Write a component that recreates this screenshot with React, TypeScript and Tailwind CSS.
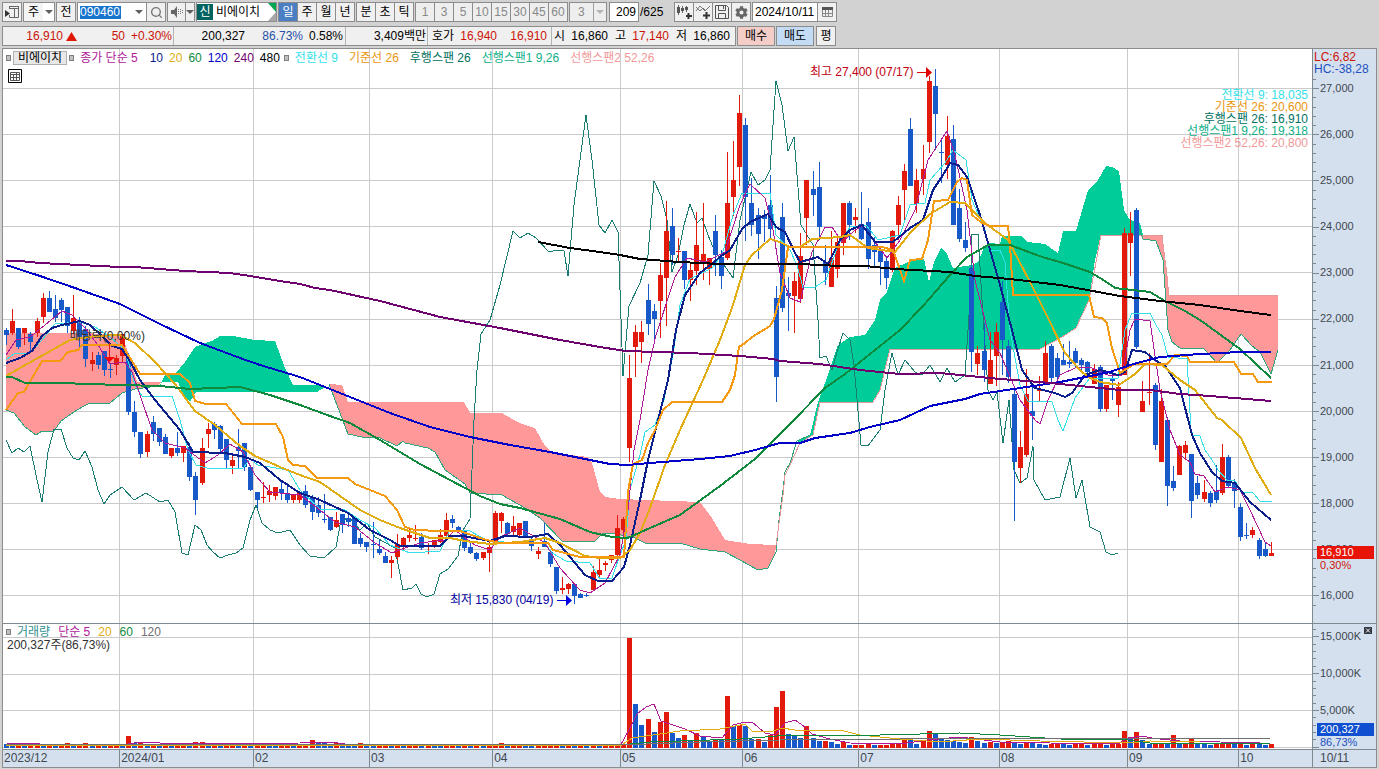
import type { ReactNode } from 'react';
import { Search } from 'lucide-react';
import { FaCog } from 'react-icons/fa';

const FIRST_X = 6;
const STEP = 6.11;

// one candle per entry: colour, high, body top, body bottom, low
const CANDLES = `
b 328 330 335 345|r 309 321 333 335|b 328 328 347 349|r 328 328 333 345|b 332 334 342 353|r 318 321 333 337|r 293 298 317 323|b 291 298 312 312
b 295 309 318 322|b 298 300 310 322|b 307 307 326 333|r 295 318 331 334|b 317 322 337 347|b 326 329 359 367|r 352 360 364 371|b 352 355 365 369
b 351 351 370 376|b 364 369 370 378|r 355 358 365 375|r 334 334 356 363|b 353 358 412 415|b 401 412 432 437|b 432 432 454 458|r 431 434 452 457
b 416 422 434 441|b 428 428 442 446|b 434 437 454 454|r 448 448 456 458|b 432 448 453 456|r 446 446 453 462|b 443 447 477 481|b 472 476 500 515
r 438 448 483 485|r 423 429 434 448|b 422 424 430 439|b 425 426 449 453|b 439 439 460 468|r 453 460 466 474|b 429 447 451 469|b 443 443 467 471
b 465 467 490 491|b 492 492 500 508|r 482 497 498 503|r 485 491 495 502|r 487 487 496 500|b 482 489 493 500|b 483 493 500 503|r 494 494 500 503
r 493 493 500 503|b 485 491 505 508|b 495 497 512 520|b 497 505 513 517|b 494 519 520 523|b 517 517 530 531|r 512 520 527 528|b 514 514 525 533
b 512 518 522 527|b 517 517 544 544|b 533 538 544 547|b 542 542 547 552|b 522 544 545 558|b 540 549 553 555|b 552 556 563 563|r 556 560 563 578
r 534 544 557 560|r 537 538 546 550|r 527 535 538 542|r 525 538 539 541|b 533 537 548 550|r 543 545 547 554|r 540 540 545 548|r 529 535 542 543
r 513 520 536 537|b 515 519 523 528|b 526 527 531 531|b 530 530 548 551|b 543 547 553 554|b 552 553 559 561|r 552 552 558 560|r 542 547 553 572
r 511 513 543 545|r 512 513 521 533|b 522 523 534 535|r 516 526 532 535|r 523 523 535 537|b 521 521 538 538|b 537 541 546 551|r 547 551 554 559
b 523 541 547 547|b 552 552 564 567|b 567 567 591 594|r 577 588 590 594|r 583 584 589 594|b 584 584 596 604|b 593 594 598 598|b 593 595 596 597
r 566 572 590 591|r 557 570 575 577|r 561 563 565 571|r 555 555 560 563|r 515 528 555 557|r 517 519 530 533|r 355 378 448 462|r 325 332 347 377
r 321 332 342 363|b 284 300 324 335|b 304 311 319 339|r 263 275 301 338|r 201 231 278 326|b 208 226 255 265|r 238 251 252 262|b 251 251 280 289
r 263 270 280 301|r 212 245 271 285|r 203 254 264 280|r 258 258 269 285|b 215 231 255 276|b 250 257 276 289|r 152 203 258 260|r 141 180 197 216
r 95 113 167 186|b 118 125 197 241|b 178 203 225 236|b 208 215 234 259|b 210 216 219 242|b 175 205 229 240|b 286 298 377 402|b 203 217 308 312
b 277 293 296 331|r 272 281 296 333|r 233 256 299 303|r 180 180 218 245|b 171 189 195 216|b 162 187 227 240|b 245 262 273 285|r 231 258 287 287
r 237 242 269 278|r 203 203 243 255|b 201 203 225 240|r 208 217 220 233|b 192 224 239 240|b 208 222 259 269|b 237 245 252 268|b 247 249 262 285
b 257 261 278 289|r 230 231 269 272|r 196 205 225 240|r 164 171 190 220|b 118 129 186 186|r 169 180 204 213|r 145 169 179 195|r 76 81 142 153
b 69 86 114 150|b 139 152 153 183|r 116 136 165 179|b 125 139 225 225|b 189 208 239 242|b 222 240 248 252|b 265 268 352 372|r 346 353 364 375
b 323 351 370 382|r 332 360 384 384|r 323 332 356 386|b 281 302 340 375|b 340 346 377 383|b 390 394 462 521|r 431 447 468 483|r 369 394 455 457
b 385 411 416 440|r 376 390 391 402|r 341 353 382 385|b 344 346 378 383|b 353 358 377 385|b 344 360 365 365|b 341 362 364 368|b 348 351 363 367
b 358 360 365 372|b 361 362 372 377|r 364 369 384 384|b 365 367 409 412|r 385 385 409 412|b 375 378 381 400|r 382 387 405 417|r 228 233 375 375
r 212 233 243 276|b 208 210 347 349|r 381 401 412 412|r 353 392 393 405|b 383 385 445 450|r 389 401 462 462|b 417 420 486 506|b 466 481 488 491
r 445 446 475 475|r 441 445 453 460|b 454 454 501 518|b 476 483 495 499|r 480 492 499 502|b 491 493 503 507|b 465 491 500 503|r 444 457 493 495
b 455 457 486 487|b 479 482 491 508|b 503 507 537 541|b 523 535 536 539|r 527 530 535 538|b 538 540 556 559|b 542 549 556 557|r 542 553 556 556`
  .trim()
  .split(/[|\n]/)
  .map((row) => {
    const [tone, ...nums] = row.split(' ');
    const [high, top, bottom, low] = nums.map(Number);
    return { up: tone === 'r', high, top, bottom, low };
  });

const VOLUMES = (
  '4 3 4 3 3 4 3 4 3 3 5 3 4 5 3 4 3 3 4 3 12 5 6 4 4 3 4 3 3 4 3 6 6 4 4 3 3 4 3 4 3 3 5 4 2 3 4 3 3 3 8 6 5 4 5 4 3 2 5 4 ' +
  '3 3 4 3 4 3 3 4 3 4 3 2 2 3 2 3 2 3 2 2 4 5 3 4 4 3 2 2 3 3 3 2 3 2 3 2 3 2 2 3 3 4 ' +
  '110 44 23 29 16 26 36 15 10 13 8 15 12 6 9 8 52 22 23 22 9 9 6 13 41 57 14 12 10 22 10 7 7 6 4 6 3 3 3 5 3 3 3 4 4 10 9 4 7 17 14 9 ' +
  '8 7 6 5 11 7 5 6 5 6 7 5 4 6 5 4 3 4 5 4 3 4 5 3 4 4 3 4 4 17 9 16 8 4 4 5 4 13 4 4 9 5 4 3 4 4 5 4 4 3 5 4 3 4 3 2'
)
  .split(' ')
  .map(Number);

const CLOUDS = [
  { fill: '#ff9999', points: '6,333 85,333 122,335 130,358 137,382 161,382 158,386 135,389 122,393 110,403 90,403 82,407 74,412 61,421 54,431 42,431 36,435 25,427 14,413 6,410' },
  { fill: '#00cc99', points: '160,386 165,375 175,374 185,362 195,347 205,343 212,341 220,336 233,336 255,340 275,341 285,368 293,385 320,385 325,387 317,392 196,392 190,402 183,395 178,382 161,382' },
  { fill: '#ff9999', points: '329,384 342,385 348,402 464,402 470,413 502,413 512,419 522,424 535,428 545,446 552,453 588,457 592,463 600,492 605,497 620,499 700,502 712,518 725,540 750,544 776,545 775,555 768,568 758,570 740,560 725,552 700,549 680,543 645,543 635,538 625,536 612,533 603,533 595,541 562,541 540,518 525,508 502,495 470,493 465,484 445,470 435,452 428,448 405,443 403,441 397,446 380,438 362,437 348,434' },
  { fill: '#00cc99', points: '797,441 810,435 818,402 828,375 838,345 850,337 865,335 875,320 880,300 887,292 895,268 908,262 924,259 929,282 934,262 941,248 947,254 953,268 972,265 978,262 984,248 990,243 1000,244 1002,236 1022,236 1027,242 1045,244 1058,253 1063,231 1076,231 1088,190 1098,180 1106,166 1112,167 1119,171 1124,210 1130,220 1140,223 1143,235 1101,235 1095,260 1089,300 1076,328 1062,337 1040,349 890,349 885,370 880,390 873,402 820,402 813,435 800,443' },
  { fill: '#ff9999', points: '1140,235 1162,235 1167,270 1169,295 1278,295 1278,350 1271,374 1260,352 1252,346 1241,334 1230,350 1217,363 1208,353 1204,349 1180,348 1172,342 1168,330 1163,260 1156,241 1143,239' },
];

const PRICE_LINES = [
  { color: '#2fa57c', width: 1, points: '6,410 14,413 25,427 36,435 42,431 54,431 61,421 74,412 82,407 90,403 110,403 122,393 135,389 158,386' },
  { color: '#2fa57c', width: 1, points: '329,384 348,434 362,437 380,438 397,446 403,441 405,443 428,448 435,452 445,470 465,484 470,493 502,495 525,508 540,518 562,541 595,541 603,533 612,533 625,536 635,538 645,543 680,543 700,549 725,552 740,560 758,570 768,568 776,552 779,520 783,490 785,472 790,463 797,441 810,435' },
  { color: '#e59a9a', width: 1, points: '776,545 783,495 785,475 790,465 800,443 813,435 820,402 873,402 880,390 890,349 1040,349 1062,337 1076,328 1089,300 1101,235 1162,235 1169,295 1278,295' },
  { color: '#2fa57c', width: 1, points: '1137,223 1143,239 1156,241 1163,260 1168,330 1172,342 1180,348 1204,349 1208,353 1217,363 1230,350 1241,334 1252,346 1260,352 1271,374 1278,350' },
  { color: '#1a7d72', width: 1, points: '6,440 12,453 18,448 24,452 30,446 36,475 42,502 48,452 54,429 61,429 67,448 73,458 79,460 85,451 92,467 98,490 104,504 110,495 122,487 134,500 146,493 160,502 168,500 175,512 182,553 188,555 195,525 201,530 207,545 213,552 220,558 228,555 236,553 243,548 250,520 256,505 262,523 270,530 278,533 290,530 300,545 310,556 324,558 336,547 341,520 350,518 360,530 367,523 375,537 395,548 403,590 412,588 416,584 421,594 427,597 434,594 440,574 448,569 458,556 463,530 470,519 472,470 474,420 477,370 481,334 490,320 500,285 513,231 520,238 528,233 536,238 549,252 557,250 564,251 568,276 574,205 586,115 592,160 599,225 605,233 612,220 618,232 623,376 629,306 640,283 648,255 654,181 661,196 667,220 672,272 678,255 684,225 690,204 697,223 702,218 708,235 715,252 722,262 733,278 740,220 751,172 758,185 765,180 770,170 776,81 782,105 788,151 794,137 801,225 813,245 818,320 820,358 826,356 832,370 837,352 843,333 850,340 854,365 861,445 868,446 880,430 885,390 892,353 898,375 905,360 915,372 922,375 930,365 940,382 947,368 955,382 965,375 970,300 972,234 978,234 982,300 988,390 993,400 997,392 1003,443 1009,400 1014,470 1020,483 1027,478 1033,446 1034,480 1045,500 1060,497 1070,458 1076,498 1082,480 1090,527 1100,532 1106,552 1112,555 1118,553' },
  { color: '#33e0e8', width: 1, points: '6,360 14,354 30,353 42,340 55,324 80,322 95,327 110,337 125,350 135,385 142,396 172,396 180,420 188,450 196,465 207,468 243,468 250,459 258,465 288,470 300,490 320,509 345,510 360,520 375,528 390,545 410,553 440,551 450,530 470,531 488,541 520,543 545,543 552,553 566,561 590,563 600,579 612,578 620,555 626,540 630,490 640,455 645,432 655,425 664,400 673,355 680,305 690,279 712,268 722,255 733,215 742,193 770,193 776,235 790,250 797,265 803,288 815,287 826,280 838,245 850,227 866,225 878,240 900,235 910,205 925,203 930,180 945,163 953,150 966,160 972,200 985,230 990,250 1000,250 1005,262 1010,330 1020,385 1028,401 1052,402 1058,420 1063,431 1075,398 1090,378 1118,378 1125,330 1132,313 1150,313 1156,325 1162,335 1168,357 1187,359 1191,430 1193,435 1200,436 1205,450 1212,460 1218,470 1227,480 1235,481 1242,492 1253,493 1260,501 1272,501' },
  { color: '#b01898', width: 1, points: '6,355 16,340 30,337 45,325 62,311 72,315 85,328 98,345 110,364 125,362 132,372 140,395 152,430 165,443 185,448 205,463 218,455 230,444 243,452 255,475 270,492 300,495 320,510 335,522 355,527 375,543 392,553 405,548 420,543 445,540 455,530 475,545 490,550 500,537 520,528 545,543 560,568 580,590 590,593 605,583 620,555 628,510 634,450 640,420 648,370 656,335 675,277 687,258 705,262 725,252 740,205 750,184 765,198 773,230 780,273 790,298 800,302 812,252 825,227 832,227 842,242 855,230 862,226 872,238 887,258 900,240 915,210 928,160 947,131 955,155 967,210 975,280 990,340 1000,353 1008,372 1020,400 1035,420 1040,424 1048,400 1060,375 1075,368 1090,367 1110,376 1122,375 1130,330 1135,319 1150,321 1160,390 1170,430 1180,455 1190,462 1195,474 1204,476 1215,492 1228,487 1240,490 1250,510 1265,542 1271,546' },
  { color: '#0a1e8c', width: 2, points: '6,363 20,358 32,351 42,336 52,328 62,325 80,321 90,325 103,337 112,346 122,349 130,361 140,380 155,400 180,430 193,452 225,453 245,457 260,463 280,480 300,493 320,500 348,513 370,530 390,540 400,546 440,546 450,536 463,536 490,541 505,536 530,537 548,534 560,545 585,575 598,581 612,581 624,567 630,545 640,500 648,460 658,420 668,380 676,330 685,295 700,273 720,257 730,250 742,229 750,222 768,214 776,227 785,232 795,253 800,262 818,257 828,264 840,240 850,230 862,225 875,242 893,242 910,228 923,220 933,190 943,175 950,163 958,165 967,177 980,215 990,250 1000,285 1012,330 1022,370 1035,388 1055,393 1065,397 1072,393 1085,375 1100,370 1118,375 1125,372 1132,350 1145,352 1155,360 1165,366 1180,388 1192,435 1200,453 1212,472 1222,481 1235,483 1250,502 1271,520' },
  { color: '#e0ac10', width: 2, points: '6,376 20,368 45,354 70,340 95,336 120,335 135,343 155,362 175,384 195,411 215,425 240,446 255,456 280,467 300,475 320,482 340,496 360,510 380,520 400,528 430,538 450,538 465,541 490,544 520,542 545,538 560,543 585,556 600,558 620,558 630,550 640,533 650,508 665,465 680,430 703,380 720,340 733,305 745,265 752,255 770,239 780,242 790,247 800,247 812,239 840,237 850,235 868,248 895,252 910,233 930,214 950,202 965,203 985,223 1008,240 1030,282 1050,322 1065,353 1080,370 1088,377 1100,382 1119,385 1135,374 1145,364 1162,365 1180,380 1195,390 1217,418 1222,420 1241,438 1255,468 1271,495' },
  { color: '#f59a10', width: 2, points: '6,410 18,393 24,392 42,361 60,361 68,352 78,350 82,345 122,345 140,374 180,374 190,383 195,401 206,404 226,404 242,424 276,424 283,437 288,460 293,465 305,466 317,478 348,478 355,484 385,496 397,510 405,527 415,530 440,531 460,531 480,538 487,540 500,543 548,543 553,550 580,557 624,557 628,492 633,464 642,460 648,443 655,430 663,410 672,402 722,402 730,390 735,375 739,347 745,343 752,337 770,326 774,319 782,290 788,247 882,247 893,250 904,281 910,260 922,259 928,240 934,201 948,200 957,182 962,178 967,180 972,215 982,223 990,226 1008,226 1010,244 1013,295 1089,295 1094,317 1102,318 1107,323 1112,348 1120,373 1128,368 1134,364 1167,364 1175,355 1187,356 1190,362 1234,362 1241,374 1253,374 1258,382 1272,382' },
  { color: '#0f8a3c', width: 2, points: '6,377 12,377 25,383 60,383 120,385 160,386 190,389 215,388 240,387 270,395 300,405 330,416 350,423 380,440 420,464 450,480 480,496 500,504 520,508 560,519 590,532 612,537 628,538 650,528 680,515 720,486 755,459 790,424 825,388 845,374 875,350 900,330 923,306 950,275 967,257 988,245 1010,245 1042,257 1060,262 1090,272 1105,281 1115,288 1150,292 1165,301 1185,311 1200,320 1240,349 1271,378' },
  { color: '#0000c8', width: 2, points: '6,265 40,276 75,288 120,304 160,324 200,343 240,358 260,365 300,377 325,387 350,397 390,413 430,427 470,437 510,445 550,452 585,459 610,464 628,465 650,463 700,459 730,456 755,450 780,443 800,443 815,438 850,433 870,427 900,420 930,406 965,399 980,394 1000,391 1040,385 1060,382 1090,376 1110,372 1130,365 1160,357 1200,354 1240,352 1271,352' },
  { color: '#700070', width: 2, points: '6,261 20,261 40,263 80,265 120,267 135,267 160,269 185,271 230,273 250,276 280,281 300,284 315,288 330,290 380,301 440,317 500,328 520,332 560,340 600,347 625,351 690,353 740,356 773,359 780,361 820,364 860,370 900,374 940,373 980,377 1000,379 1040,382 1080,386 1120,390 1150,390 1180,394 1210,396 1271,401' },
  { color: '#000000', width: 2, points: '538,242 570,248 600,252 620,255 640,259 680,262 720,264 800,264 840,266 865,266 895,269 950,272 975,276 1010,279 1060,285 1120,296 1160,301 1200,305 1240,311 1271,315' },
];

const VOLUME_LINES = [
  { color: '#b01898', points: '6,743 40,744 128,744 140,742 155,742 165,744 300,743 330,742 345,744 620,746 629,730 637,714 646,707 654,704 661,721 685,729 700,736 722,738 733,725 745,722 752,722 765,733 775,735 785,723 795,720 805,727 812,734 830,739 850,743 900,744 928,740 960,737 1000,742 1050,743 1118,744 1128,738 1142,736 1152,738 1160,739 1180,741 1260,743' },
  { color: '#e0ac10', points: '6,745 300,745 620,746 632,738 660,734 680,731 720,729 745,724 752,731 770,732 782,728 795,730 840,730 860,735 900,739 940,742 980,739 1040,741 1128,743 1150,741 1200,742 1270,742' },
  { color: '#0f8a3c', points: '6,744 620,745 650,742 710,740 740,739 790,735 880,735 960,733 1000,735 1060,739 1128,740 1150,743 1270,743' },
  { color: '#707070', points: '6,744 620,745 700,742 780,740 900,739 1040,738 1270,738' },
];

const GRID_X = [120, 254, 370, 493, 621, 743, 859, 1000, 1128, 1239];
const PRICES = ['27,000', '26,000', '25,000', '24,000', '23,000', '22,000', '21,000', '20,000', '19,000', '18,000', '17,000', '16,000'];

const MONTHS = [
  { label: '2023/12', span: 117 },
  { label: '2024/01', span: 134 },
  { label: '02', span: 116 },
  { label: '03', span: 123 },
  { label: '04', span: 128 },
  { label: '05', span: 122 },
  { label: '06', span: 116 },
  { label: '07', span: 141 },
  { label: '08', span: 128 },
  { label: '09', span: 111 },
  { label: '10', span: 73 },
];

const toolButton = 'flex h-5 w-5 shrink-0 items-center justify-center border border-[#8c8c8c] bg-[#f0f0f0] -ml-px';

function Chevron({ muted = false }: { muted?: boolean }) {
  return (
    <svg className={muted ? 'h-1 w-2 text-[#b4b4b4]' : 'h-1 w-2 text-[#606060]'} viewBox="0 0 8 4" aria-hidden="true">
      <path d="M0 0h8L4 4z" fill="currentColor" />
    </svg>
  );
}

function Bullet() {
  return <span className="h-[6px] w-[5px] shrink-0 border border-[#808080] bg-[#c0c0c0]" />;
}

function Tabs({ items, active, muted = false }: { items: string[]; active?: string; muted?: boolean }) {
  return (
    <div className="flex pl-px">
      {items.map((item) => (
        <button
          key={item}
          type="button"
          className={
            item === active
              ? '-ml-px h-5 w-5 border border-[#8c8c8c] bg-[#4a7fc4] text-white'
              : muted
                ? '-ml-px h-5 w-5 border border-[#8c8c8c] bg-[#eeeeee] text-[#888888]'
                : '-ml-px h-5 w-5 border border-[#8c8c8c] bg-[#f0f0f0]'
          }
        >
          {item}
        </button>
      ))}
    </div>
  );
}

function Toolbar() {
  return (
    <div className="flex h-5 items-center gap-px leading-4">
      <button type="button" aria-label="패널" className="flex h-5 w-5 items-center justify-center border border-[#8c8c8c] bg-[#f0f0f0]">
        <svg className="h-3 w-[14px]" viewBox="0 0 14 12" aria-hidden="true">
          <path d="M4.500 3V.5h9v11h-9V9M9.500 3v8.500M4 .5h10M5 2.500h8" fill="none" stroke="#666" />
          <path d="M0 4v7l5-3.500z" fill="#333" />
        </svg>
      </button>
      <label className="flex h-5 border border-[#8c8c8c] bg-white">
        <select aria-label="시장" className="w-[19px] appearance-none bg-[#f4f4f4] pl-1 outline-none">
          <option>주</option>
        </select>
        <span className="flex w-[11px] items-center justify-center"><Chevron /></span>
      </label>
      <button type="button" className="h-5 w-5 border border-[#8c8c8c] bg-[#f0f0f0]">전</button>
      <div className="flex h-5 w-[89px] border border-[#8c8c8c] bg-white">
        <div className="flex w-[54px] items-center pl-[2px]">
          <input aria-label="종목코드" defaultValue="090460" className="h-[13px] w-[41px] bg-[#1874cd] leading-3 text-white outline-none" />
        </div>
        <button type="button" aria-label="종목 목록" className="flex w-[14px] items-center justify-center"><Chevron /></button>
        <button type="button" aria-label="검색" className="flex flex-1 items-center justify-center border-l border-[#8c8c8c] bg-[#f0f0f0] text-[#777]">
          <Search size={13} strokeWidth={2.5} />
        </button>
      </div>
      <div className="flex h-5 w-7 border border-[#8c8c8c] bg-[#f0f0f0]">
        <button type="button" aria-label="소리" className="flex w-[17px] items-center justify-center">
          <svg className="h-3 w-3" viewBox="0 0 12 12" aria-hidden="true">
            <path d="M0 4h3l3-4v12L3 8H0z" fill="#666" />
            <path d="M7.500 3v6M9.500 3v6M11.500 4v4" stroke="#777" strokeDasharray="1 1" />
          </svg>
        </button>
        <button type="button" aria-label="소리 설정" className="flex flex-1 items-center justify-center border-l border-[#8c8c8c]"><Chevron /></button>
      </div>
      <div className="flex h-5 w-[81px] items-center border border-[#8c8c8c] bg-white">
        <span className="flex h-4 w-4 items-center justify-center bg-[#00635f] text-white">신</span>
        <span className="flex-1 pl-[3px] whitespace-nowrap">비에이치</span>
        <svg className="h-[18px] w-2" viewBox="0 0 8 18" aria-hidden="true">
          <path d="M0 0h8v9z" fill="#00a651" />
          <path d="M8 9v9H0z" fill="#a8a8a8" />
        </svg>
      </div>
      <Tabs items={['일', '주', '월', '년']} active="일" />
      <Tabs items={['분', '초', '틱']} />
      <Tabs items={['1', '3', '5', '10', '15', '30', '45', '60']} muted />
      <label className="flex h-5 w-[38px] border border-[#8c8c8c] bg-[#eeeeee] text-[#888888]">
        <select aria-label="주기" className="w-[23px] appearance-none pl-2 outline-none">
          <option>3</option>
        </select>
        <span className="flex flex-1 items-center justify-center border-l border-[#a0a0a0]"><Chevron muted /></span>
      </label>
      <label className="ml-px flex items-center">
        <input aria-label="표시 봉수" defaultValue="209" className="h-5 w-[30px] border border-[#8c8c8c] bg-white pr-[2px] text-right outline-none" />
        <span className="w-[34px] pl-px">/625</span>
      </label>
      <div className="flex pl-px">
        <button type="button" aria-label="차트 유형" className={toolButton}>
          <svg className="h-[14px] w-4" viewBox="0 0 16 14" aria-hidden="true">
            <path d="M2.500 0v10M6.500 1v7M10.500 1v6" stroke="#666" />
            <path d="M1 2h3v6H1zM5 3h3v3H5zM9 2h3v3H9z" fill="#555" />
            <path d="M12.500 8v6M10 11h6" stroke="#333" strokeWidth="2" />
          </svg>
        </button>
        <button type="button" aria-label="지표 추가" className={toolButton}>
          <svg className="h-[14px] w-4" viewBox="0 0 16 14" aria-hidden="true">
            <path d="M1 6l4-5 5 5 5-5M1 2l4 4 3-3 3 3" fill="none" stroke="#777" />
            <path d="M11.500 7v7M8 10.500h7" stroke="#333" strokeWidth="2" />
          </svg>
        </button>
        <button type="button" aria-label="저장" className={toolButton}>
          <svg className="h-[14px] w-[14px]" viewBox="0 0 14 14" aria-hidden="true">
            <path d="M.5.5h11l2 2v11H.5zM3.500.5v5h7v-5M3.500 13.500v-5h7v5M8.500 1v3" fill="none" stroke="#555" />
          </svg>
        </button>
        <button type="button" aria-label="설정" className={toolButton}>
          <FaCog size={13} color="#666" />
        </button>
      </div>
      <div className="flex h-5 border border-[#8c8c8c] bg-white">
        <input aria-label="날짜" defaultValue="2024/10/11" className="w-16 pl-[2px] outline-none" />
        <button type="button" aria-label="달력" className="flex w-[19px] items-center justify-center border-l border-[#8c8c8c] bg-[#f0f0f0]">
          <svg className="h-[10px] w-[11px]" viewBox="0 0 11 10" aria-hidden="true">
            <path d="M.5.5h10v9H.5zM3.500 3v6M6.500 3v6M1 6.500h9" fill="none" stroke="#888" />
            <path d="M0 0h11v3H0z" fill="#555" />
          </svg>
        </button>
      </div>
    </div>
  );
}

function QuoteBar() {
  return (
    <div className="flex h-5 items-center gap-px text-right leading-[18px] whitespace-nowrap">
      <div className="flex h-5 items-center border border-[#8c8c8c] bg-[#f0f0f0]">
        <span className="w-[60px] text-[#cc1408]">16,910</span>
        <svg className="ml-[3px] h-[9px] w-[11px]" viewBox="0 0 11 9" aria-hidden="true">
          <path d="M5.500 0L11 9H0z" fill="#e01808" />
        </svg>
        <span className="w-12 text-[#cc1408]">50</span>
        <span className="h-[18px] w-[49px] border-r border-[#b4b4b4] pr-px text-[#cc1408]">+0.30%</span>
        <span className="w-[71px]">200,327</span>
        <span className="w-[58px] text-[#2850a8]">86.73%</span>
        <span className="h-[18px] w-[43px] border-r border-[#b4b4b4] pr-[2px]">0.58%</span>
        <span className="h-[18px] w-[82px] border-r border-[#b4b4b4] pr-px">3,409백만</span>
        <span className="w-[26px]">호가</span>
        <span className="w-[43px] text-[#cc1408]">16,940</span>
        <span className="h-[18px] w-[55px] border-r border-[#b4b4b4] pr-1 text-[#cc1408]">16,910</span>
        <span className="w-[13px]">시</span>
        <span className="w-[43px]">16,860</span>
        <span className="w-[18px]">고</span>
        <span className="w-[43px] text-[#cc1408]">17,140</span>
        <span className="w-[18px]">저</span>
        <span className="w-[48px] pr-[5px]">16,860</span>
      </div>
      <button type="button" className="h-5 w-[38px] border border-[#8c8c8c] bg-[#f5cdc8]">매수</button>
      <button type="button" className="h-5 w-[38px] border border-[#8c8c8c] bg-[#c3dbf5]">매도</button>
      <button type="button" className="ml-px h-5 w-5 border border-[#8c8c8c] bg-[#f0f0f0]">평</button>
    </div>
  );
}

function Grid({ rows, top, bottom }: { rows: number[]; top: number; bottom: number }) {
  return (
    <g stroke="#cbcbcb" shapeRendering="crispEdges">
      {GRID_X.map((x) => (
        <line key={x} x1={x - 0.5} x2={x - 0.5} y1={top} y2={bottom} />
      ))}
      {rows.map((y) => (
        <line key={y} x1={3} x2={1312} y1={y + 0.5} y2={y + 0.5} />
      ))}
    </g>
  );
}

function PriceChart() {
  return (
    <svg className="absolute inset-0 h-full w-full" viewBox="3 49 1309 574" preserveAspectRatio="none" aria-label="주가 차트">
      <Grid rows={PRICES.map((_, i) => Math.round(88 + i * 46.1))} top={49} bottom={623} />
      <g shapeRendering="crispEdges">
        {CLOUDS.map((cloud) => (
          <polygon key={cloud.points} points={cloud.points} fill={cloud.fill} />
        ))}
        {PRICE_LINES.slice(0, 5).map((line) => (
          <polyline key={line.points} points={line.points} fill="none" stroke={line.color} strokeWidth={line.width} />
        ))}
        {CANDLES.map((c, i) => {
          const x = Math.round(FIRST_X + i * STEP);
          const fill = c.up ? '#e11a0c' : '#1759c8';
          return (
            <g key={i} fill={fill}>
              <rect x={x} y={c.high} width={1} height={c.low - c.high} />
              <rect x={x - 2} y={c.top} width={5} height={c.bottom - c.top} />
            </g>
          );
        })}
        {PRICE_LINES.slice(5).map((line) => (
          <polyline key={line.points} points={line.points} fill="none" stroke={line.color} strokeWidth={line.width} />
        ))}
      </g>
      <path d="M109.500 343v16" stroke="#e11a0c" />
      <path d="M104 357h11l-5.500 5z" fill="#ff0000" />
    </svg>
  );
}

function VolumeChart() {
  return (
    <svg className="absolute inset-0 h-full w-full" viewBox="3 624 1309 125" preserveAspectRatio="none" aria-label="거래량 차트">
      <Grid rows={[637, 674, 710, 747]} top={624} bottom={749} />
      <g shapeRendering="crispEdges">
        {VOLUMES.slice(0, CANDLES.length).map((v, i) => (
          <rect
            key={i}
            x={Math.round(FIRST_X + i * STEP) - 2}
            y={748 - v}
            width={5}
            height={v}
            fill={i > 0 && v >= VOLUMES[i - 1] ? '#e11a0c' : '#1759c8'}
          />
        ))}
        {VOLUME_LINES.map((line) => (
          <polyline key={line.color} points={line.points} fill="none" stroke={line.color} />
        ))}
      </g>
    </svg>
  );
}

function Ticks({ from, to, step, major, view }: { from: number; to: number; step: number; major: number; view: string }) {
  const count = Math.floor((to - from) / step) + 1;
  return (
    <svg className="absolute top-0 left-0 h-full w-[6px]" viewBox={view} preserveAspectRatio="none" aria-hidden="true">
      <g stroke="#808890" shapeRendering="crispEdges">
        {Array.from({ length: count }, (_, i) => (
          <line key={i} x1={0} x2={i % 5 === major ? 6 : 3} y1={from + i * step} y2={from + i * step} />
        ))}
      </g>
    </svg>
  );
}

function Axis({ children }: { children: ReactNode }) {
  return <div className="relative w-16 shrink-0 border-l border-[#808890] bg-[#d5e0ef] text-[#404850]">{children}</div>;
}

export default function App() {
  return (
    <div className="flex h-screen min-h-[480px] w-full flex-col overflow-hidden bg-[#d2d2d2] px-[2px] pt-[2px] pb-px font-['Liberation_Sans','Noto_Sans_CJK_KR',sans-serif] text-xs text-black">
      <header className="flex flex-col gap-1">
        <Toolbar />
        <QuoteBar />
      </header>

      <main className="mt-[2px] flex min-h-0 flex-1 flex-col border border-[#8c8c8c] bg-white leading-3 whitespace-nowrap">
        {/* 가격 */}
        <section className="flex min-h-0 flex-1">
          <div className="relative min-w-0 flex-1">
            <PriceChart />
            <div className="absolute top-[2px] left-[3px] flex h-[14px] items-center">
              <Bullet />
              <span className="mx-[2px] border border-[#b0b0b0] bg-[#e8e8e8] px-1 leading-3">비에이치</span>
              <Bullet />
              <div className="ml-[6px] flex gap-[6px]">
                <span className="pr-[6px] text-[#b01898]">종가 단순 5</span>
                <span className="text-[#0a1e8c]">10</span>
                <span className="text-[#e0ac10]">20</span>
                <span className="text-[#0f8a3c]">60</span>
                <span className="text-[#0000c8]">120</span>
                <span className="text-[#700070]">240</span>
                <span>480</span>
              </div>
              <span className="ml-1 flex"><Bullet /></span>
              <div className="ml-[6px] flex gap-[11px]">
                <span className="text-[#33e0e8]">전환선 9</span>
                <span className="text-[#e8960c]">기준선 26</span>
                <span className="text-[#007060]">후행스팬 26</span>
                <span className="text-[#10b088]">선행스팬1 9,26</span>
                <span className="text-[#f09898]">선행스팬2 52,26</span>
              </div>
            </div>
            <button type="button" aria-label="데이터 표" className="absolute top-5 left-[5px]">
              <svg className="h-[14px] w-[14px]" viewBox="0 0 14 14" aria-hidden="true">
                <path d="M.5.5h13v13H.5z" fill="#fff" stroke="#000" />
                <path d="M2.500 3.500h9v8h-9zM2.500 5.500h9M2.500 8.500h9M5.500 5.500v6M8.500 3.500v8" fill="none" stroke="#555" />
              </svg>
            </button>
            <div className="absolute top-10 right-1 text-right">
              <p className="text-[#33e0e8]">전환선 9: 18,035</p>
              <p className="text-[#e8960c]">기준선 26: 20,600</p>
              <p className="text-[#007060]">후행스팬 26: 16,910</p>
              <p className="text-[#10b088]">선행스팬1 9,26: 19,318</p>
              <p className="text-[#f09898]">선행스팬2 52,26: 20,800</p>
            </div>
            <p className="absolute top-[49%] left-[5.1%] text-[#303030]">배당락(0,00%)</p>
            <p className="absolute top-[3%] right-[29%] flex items-center gap-1 text-[#c00010]">
              최고 27,400 (07/17)
              <svg className="h-[11px] w-[15px]" viewBox="0 0 15 11" aria-hidden="true">
                <path d="M0 5.500h10" stroke="#e00000" />
                <path d="M9 0l6 5.500L9 11z" fill="#e00000" />
              </svg>
            </p>
            <p className="absolute top-[95%] right-[56.500%] flex items-center gap-1 text-[#0000a0]">
              최저 15,830 (04/19)
              <svg className="h-[11px] w-[15px]" viewBox="0 0 15 11" aria-hidden="true">
                <path d="M0 5.500h10" stroke="#0000e0" />
                <path d="M9 0l6 5.500L9 11z" fill="#0000e0" />
              </svg>
            </p>
          </div>
          <Axis>
            <Ticks from={79.5} to={613} step={9.22} major={1} view="0 49 6 574" />
            <div className="absolute top-[2px] left-px">
              <p className="text-[#cc1408]">LC:6,82</p>
              <p className="text-[#2050c0]">HC:-38,28</p>
            </div>
            <div className="flex h-full flex-col pt-4 pb-[5px] pl-[7px] text-[11px]">
              {PRICES.map((price) => (
                <div key={price} className="flex flex-1 items-center">{price}</div>
              ))}
            </div>
            <div className="absolute top-[86.500%] right-[2px] left-1 text-[11px]">
              <p className="bg-[#e81408] pl-[3px] leading-[13px] text-white">16,910</p>
              <p className="pl-[3px] text-[#cc1408]">0,30%</p>
            </div>
          </Axis>
        </section>

        {/* 거래량 */}
        <section className="flex h-[126px] shrink-0 border-t border-[#808890]">
          <div className="relative min-w-0 flex-1">
            <VolumeChart />
            <div className="absolute top-[2px] left-[3px] text-[#303030]">
              <div className="flex items-center gap-2">
                <div className="flex items-center gap-[6px]">
                  <Bullet />
                  <span className="text-[#309090]">거래량</span>
                </div>
                <span className="text-[#b01898]">단순 5</span>
                <span className="text-[#e0ac10]">20</span>
                <span className="text-[#0f8a3c]">60</span>
                <span className="text-[#707070]">120</span>
              </div>
              <p className="pt-px pl-px">200,327주(86,73%)</p>
            </div>
          </div>
          <Axis>
            <Ticks from={629.5} to={748} step={7.36} major={1} view="0 624 6 125" />
            <div className="flex flex-col gap-[25px] pt-[6px] pl-[7px] text-[11px]">
              <span>15,000K</span>
              <span>10,000K</span>
              <span>5,000K</span>
            </div>
            <button type="button" aria-label="닫기" className="absolute top-[3px] right-1">
              <svg className="h-[7px] w-2" viewBox="0 0 8 7" aria-hidden="true">
                <path d="M0 0h8v7H0z" fill="#303840" />
                <path d="M2 1.500l4 4M6 1.500l-4 4" stroke="#fff" />
              </svg>
            </button>
            <div className="absolute right-[2px] bottom-px left-1 text-[11px]">
              <p className="bg-[#1050d0] pl-[3px] leading-[13px] text-white">200,327</p>
              <p className="pl-[3px] text-[#2050c0]">86,73%</p>
            </div>
          </Axis>
        </section>

        {/* 날짜 */}
        <footer className="flex h-[18px] shrink-0 border-t border-[#808890] bg-[#d5e0ef] leading-4 text-[#404850]">
          <div className="flex min-w-0 flex-1">
            {MONTHS.map((month, i) => (
              <div
                key={month.label}
                className={i === 0 ? 'min-w-0 basis-0 pl-px' : 'min-w-0 basis-0 border-l border-[#808890] pl-px'}
                style={{ flexGrow: month.span }}
              >
                {month.label}
              </div>
            ))}
          </div>
          <div className="w-16 shrink-0 border-l border-[#808890] pl-[7px]">10/11</div>
        </footer>
      </main>
    </div>
  );
}
